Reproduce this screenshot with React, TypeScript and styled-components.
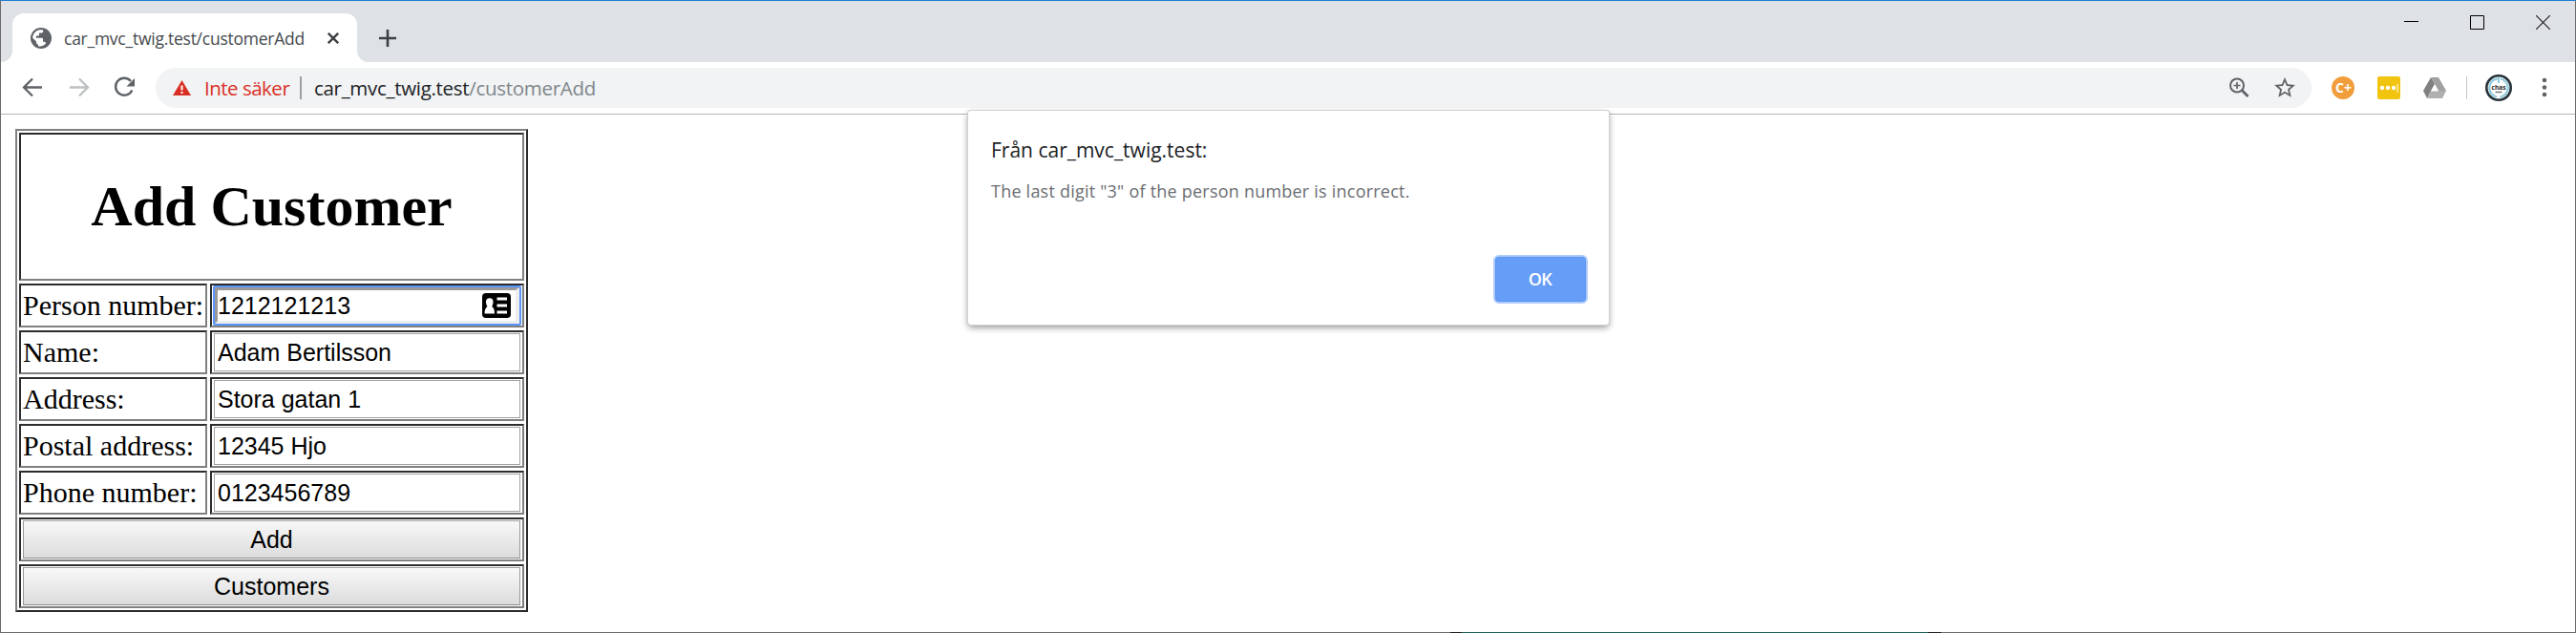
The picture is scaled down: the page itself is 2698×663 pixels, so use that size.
import React from "react";
import styled, { createGlobalStyle, css } from "styled-components";

const ui = `"Open Sans", "Noto Sans", sans-serif`;

const GlobalStyle = createGlobalStyle`
  * { box-sizing: border-box; }
  html, body { margin: 0; padding: 0; background: #fff; }
  body { overflow: hidden; }
`;

const Window = styled.div`
  position: relative;
  display: flex;
  flex-direction: column;
  width: 2698px;
  height: 663px;
  background: #fff;
  border: 1px solid #6a6a6a;
  border-top: 1px solid #1a80d4;
  font-family: ${ui};
`;

const BottomEdge = styled.i`
  position: absolute;
  left: 1518px;
  bottom: -1px;
  width: 514px;
  height: 1px;
  background: linear-gradient(90deg, #222 12px, #1f5f5a 12px 500px, #222 500px);
`;

const TitleBar = styled.div`
  display: flex;
  align-items: flex-end;
  height: 64px;
  flex: none;
  padding-left: 12px;
  background: #dee1e6;
`;

const Tab = styled.div`
  position: relative;
  display: flex;
  align-items: center;
  width: 361px;
  height: 51px;
  padding: 0 18px 0 19px;
  background: #fff;
  border-radius: 12px 12px 0 0;
`;

const TabFoot = styled.svg<{ $side: "left" | "right" }>`
  position: absolute;
  bottom: 0;
  ${(p) => (p.$side === "left" ? "left: -12px;" : "right: -12px; transform: scaleX(-1);")}
`;

const Label = styled.span<{ $size: number; $width: number; $color: string; $spacing: number }>`
  flex: none;
  width: ${(p) => p.$width}px;
  font-size: ${(p) => p.$size}px;
  line-height: 28px;
  letter-spacing: ${(p) => p.$spacing}px;
  color: ${(p) => p.$color};
  white-space: nowrap;
`;

const TabTitle = styled(Label)`
  margin-left: 13px;
  margin-right: 25px;
`;

const NewTab = styled.svg`
  margin: 0 0 16px 23px;
`;

const Captions = styled.div`
  display: flex;
  align-self: flex-start;
  gap: 53px 54px;
  margin: 15px 26px 0 auto;
`;

const Toolbar = styled.div`
  display: flex;
  align-items: center;
  height: 55px;
  flex: none;
  padding: 0 18px 0 20px;
  border-bottom: 1px solid #b3b4b6;
`;

const NavButtons = styled.div`
  display: flex;
  flex: none;
  gap: 22px;
  width: 142px;
`;

const Omnibox = styled.div`
  display: flex;
  flex: none;
  align-items: center;
  width: 2258px;
  height: 42px;
  padding: 0 16px 0 18px;
  border-radius: 21px;
  background: #f1f3f4;
`;

const Divider = styled.i<{ $width: number; $color: string }>`
  flex: none;
  width: ${(p) => p.$width}px;
  height: 24px;
  background: ${(p) => p.$color};
`;

const SecurityText = styled(Label)`
  margin-left: 14px;
  margin-right: 11px;
`;

const Url = styled(Label)`
  margin-left: 13px;
  span { color: #80868b; }
`;

const OmniActions = styled.div`
  display: flex;
  gap: 24px;
  margin-left: auto;
`;

const Extensions = styled.div`
  display: flex;
  flex: none;
  align-items: center;
  gap: 24px;
  margin-left: 21px;
`;

const ExtensionDivider = styled(Divider)`
  margin-left: -3px;
  margin-right: -5px;
`;

const Content = styled.main`
  flex: 1;
  padding: 15px;
`;

const FormTable = styled.form`
  display: grid;
  grid-template-columns: 197px 329px;
  grid-template-rows: 155px repeat(7, 46px);
  gap: 3px;
  width: 537px;
  padding: 2px;
  border: 2px solid;
  border-color: #808080 #2c2c2c #2c2c2c #808080;
`;

const Cell = styled.div<{ $wide?: boolean }>`
  display: flex;
  align-items: center;
  ${(p) => p.$wide && "grid-column: span 2;"}
  padding: 1px 2px;
  border: 2px solid;
  border-color: #2c2c2c #808080 #808080 #2c2c2c;
  font: 30px "Liberation Serif", serif;
  color: #000;
  white-space: nowrap;
`;

const Heading = styled.h1`
  flex: 1;
  margin: 0;
  font-size: 60px;
  font-weight: bold;
  text-align: center;
`;

const control = css`
  width: 100%;
  height: 40px;
  margin: 0;
  border: 1px solid #a2a2a2;
  border-radius: 0;
  font: 25px "Liberation Sans", sans-serif;
  color: #000;
`;

const Field = styled.input`
  ${control}
  padding: 0 2px 0 3px;
  background: #fff;
  outline: none;
`;

const FocusFrame = styled.div`
  display: flex;
  align-items: center;
  flex: none;
  width: 323px;
  height: 42px;
  margin: 0 -1px;
  border: 2px solid #5a96fa;
  border-radius: 2px;
`;

const FocusedField = styled.input`
  width: 283px;
  flex: 1;
  height: 38px;
  padding: 0;
  border: 3px solid;
  border-color: #999 #eee #eee #999;
  border-right-width: 4px;
  outline: none;
  background: #fff;
  font: 25px "Liberation Sans", sans-serif;
  color: #000;
`;

const ContactIcon = styled.svg`
  position: absolute;
  left: 504px;
  top: 306px;
`;

const FormButton = styled.button`
  ${control}
  padding: 0;
  border-color: #a2a2a2 #999 #8c8c8c #999;
  background: linear-gradient(#f8f8f8, #dcdcdc);
`;

const Dialog = styled.section`
  position: absolute;
  left: 1013px;
  top: 115px;
  display: flex;
  flex-direction: column;
  width: 671px;
  height: 224px;
  padding: 27px 22px 22px 24px;
  background: #fff;
  border-radius: 3px;
  box-shadow: 0 0 0 1px #cfcfcf, 0 3px 7px rgba(0, 0, 0, 0.42);
`;

const DialogMessage = styled(Label)`
  margin-top: 15px;
`;

const OkButton = styled.button`
  align-self: flex-end;
  width: 99px;
  height: 51px;
  margin-top: auto;
  padding: 0 1px 1px 0;
  border: 2px solid #aecbfa;
  border-radius: 6px;
  background: #669df6;
  box-shadow: inset 0 0 0 1px #5a93f5;
  font: 600 18px ${ui};
  letter-spacing: -0.6px;
  color: #fff;
`;

const Globe = () => (
  <svg width="22" height="22" viewBox="2 2 20 20">
    <circle cx="12" cy="12" r="10" fill="#5f6368" />
    <path
      fill="#fff"
      d="M4 11.2c.3-3 2.400-5.900 5.600-6.900 1.200-.3 3-.4 4.400.1v.9c0 1-.8 1.700-1.800 1.700h-2v1.900c0 .5-.4.900-1 .9H7.300v1.900h5.500c.6 0 1 .5 1 1v2.700h1c.9 0 1.600.6 1.900 1.400-2.200 2.700-5 3.400-7.500 2.700v-1.600c-1 0-1.700-.8-1.700-1.800v-1L4.200 12z"
    />
  </svg>
);

const rows = [
  { label: "Name:", value: "Adam Bertilsson" },
  { label: "Address:", value: "Stora gatan 1" },
  { label: "Postal address:", value: "12345 Hjo" },
  { label: "Phone number:", value: "0123456789" },
];

export default function App() {
  return (
    <Window>
      <GlobalStyle />
      <TitleBar>
        <Tab>
          <TabFoot $side="left" width="12" height="12"><path d="M12 0v12H0A12 12 0 0 0 12 0z" fill="#fff" /></TabFoot>
          <TabFoot $side="right" width="12" height="12"><path d="M12 0v12H0A12 12 0 0 0 12 0z" fill="#fff" /></TabFoot>
          <Globe />
          <TabTitle $size={17.5} $width={251} $color="#45494d" $spacing={-0.25}>car_mvc_twig.test/customerAdd</TabTitle>
          <svg width="12" height="12"><path d="M.8.8l10.400 10.400M11.200.8L.8 11.200" stroke="#3c4043" strokeWidth="2.400" /></svg>
        </Tab>
        <NewTab width="18" height="18"><path d="M9 0v18M0 9h18" stroke="#3c4043" strokeWidth="2.600" /></NewTab>
        <Captions>
          <svg width="15" height="15"><path d="M0 6.500h15" stroke="#000" /></svg>
          <svg width="15" height="15"><path d="M.5.5h14v14H.5z" stroke="#000" fill="none" /></svg>
          <svg width="15" height="15"><path d="M0 0l15 15M15 0L0 15" stroke="#222" strokeWidth="1.200" /></svg>
        </Captions>
      </TitleBar>
      <Toolbar>
        <NavButtons>
          <svg width="26" height="26" fill="none" stroke="#5f6368" strokeWidth="2.300"><path d="M23 12.500H4.500M13 3.500l-9 9 9 9" /></svg>
          <svg width="26" height="26" fill="none" stroke="#bdc0c2" strokeWidth="2.300"><path d="M4 12.500h18.500M14 3.500l9 9-9 9" /></svg>
          <svg width="26" height="26">
            <path d="M20 6A9 9 0 1 0 21.300 15.500" fill="none" stroke="#5f6368" strokeWidth="2.400" />
            <path d="M24 3v8.500h-8.500z" fill="#5f6368" />
          </svg>
        </NavButtons>
        <Omnibox>
          <svg width="19" height="16"><path d="M9.500 0L19 16H0z" fill="#d93025" /><path d="M9.500 5.500v5M9.500 12v2" stroke="#fff" strokeWidth="2" /></svg>
          <SecurityText $size={20.5} $width={89} $color="#d93025" $spacing={-0.5}>Inte säker</SecurityText>
          <Divider $width={2} $color="#9aa0a6" />
          <Url $size={20.5} $width={294} $color="#202124" $spacing={-0.3}>car_mvc_twig.test<span>/customerAdd</span></Url>
          <OmniActions>
            <svg width="24" height="24" fill="none" stroke="#5f6368" strokeWidth="2">
              <circle cx="10" cy="9.500" r="7" /><path d="M15 14.500l6.500 6.500" strokeWidth="2.800" /><path d="M10 6v7M6.500 9.500h7" strokeWidth="1.700" />
            </svg>
            <svg width="24" height="24" viewBox="1 1 22 22">
              <path fill="#5f6368" d="M22 9.240l-7.190-.62L12 2 9.190 8.630 2 9.240l5.460 4.730L5.820 21 12 17.270 18.180 21l-1.630-7.030L22 9.240zM12 15.400l-3.760 2.270 1-4.280-3.320-2.880 4.380-.38L12 6.100l1.710 4.040 4.380.38-3.320 2.880 1 4.280L12 15.400z" />
            </svg>
          </OmniActions>
        </Omnibox>
        <Extensions>
          <svg width="24" height="24">
            <circle cx="12" cy="12" r="12" fill="#f09e3c" />
            <text x="12.500" y="17" textAnchor="middle" fontFamily="Open Sans, sans-serif" fontWeight="700" fontSize="14" fill="#fff">C+</text>
          </svg>
          <svg width="24" height="24">
            <rect width="24" height="24" rx="2" fill="#f1c40f" />
            <g fill="#fff"><circle cx="5" cy="12" r="2.200" /><circle cx="11" cy="12" r="2.200" /><circle cx="17" cy="12" r="2.200" /><rect x="20.500" y="8" width="1" height="9" /></g>
          </svg>
          <svg width="24" height="22">
            <path d="M8 0L0 14l4 8L12 7z" fill="#808080" /><path d="M8 0h8l8 14h-8z" fill="#a0a0a0" /><path d="M4 22l4-8h16l-4 8z" fill="#b0b0b0" /><path d="M12 7.500l4 7H8z" fill="#fff" />
          </svg>
          <ExtensionDivider $width={1} $color="#c4c6ca" />
          <svg width="28" height="28">
            <circle cx="14" cy="14" r="12.700" fill="#fff" stroke="#26323a" strokeWidth="2.600" />
            <circle cx="14" cy="14" r="9.700" fill="none" stroke="#8fcbdc" strokeWidth="2.200" strokeDasharray="27 3.500" strokeDashoffset="-17" />
            <path d="M14 3v6" stroke="#8fcbdc" strokeWidth="2" />
            <text x="14" y="16" textAnchor="middle" fontFamily="Open Sans, sans-serif" fontWeight="700" fontSize="6.500" fill="#222">chas</text>
            <path d="M10.500 18.500h7" stroke="#777" strokeWidth="1.500" />
          </svg>
          <svg width="24" height="24" fill="#5f6368"><circle cx="10" cy="4" r="2.300" /><circle cx="10" cy="11.500" r="2.300" /><circle cx="10" cy="19" r="2.300" /></svg>
        </Extensions>
      </Toolbar>
      <Content>
        <FormTable onSubmit={(e) => e.preventDefault()}>
          <Cell $wide><Heading>Add Customer</Heading></Cell>
          <Cell>Person number:</Cell>
          <Cell>
            <FocusFrame><FocusedField defaultValue="1212121213" /></FocusFrame>
            <ContactIcon width="30" height="26" viewBox="0 0 30 26">
              <rect width="30" height="26" rx="4" fill="#000" />
              <path d="M2.500 21.500c0-4 1-6 3-7.500C4 12 4 10 4 8.500a3.800 3.800 0 0 1 7.500 0c0 1.500 0 3.500-1.300 5.500 2 1.500 2.800 3.500 2.800 7.500z" fill="#fff" />
              <path d="M15.500 6H26M15.500 13H26M15.500 20H26" stroke="#fff" strokeWidth="3" />
            </ContactIcon>
          </Cell>
          {rows.map((r) => (
            <React.Fragment key={r.label}>
              <Cell>{r.label}</Cell>
              <Cell><Field defaultValue={r.value} /></Cell>
            </React.Fragment>
          ))}
          <Cell $wide><FormButton>Add</FormButton></Cell>
          <Cell $wide><FormButton>Customers</FormButton></Cell>
        </FormTable>
      </Content>
      <Dialog>
        <Label $size={21} $width={227} $color="#202124" $spacing={0}>Från car_mvc_twig.test:</Label>
        <DialogMessage $size={18} $width={439} $color="#6a6d72" $spacing={0.22}>The last digit "3" of the person number is incorrect.</DialogMessage>
        <OkButton>OK</OkButton>
      </Dialog>
      <BottomEdge />
    </Window>
  );
}
